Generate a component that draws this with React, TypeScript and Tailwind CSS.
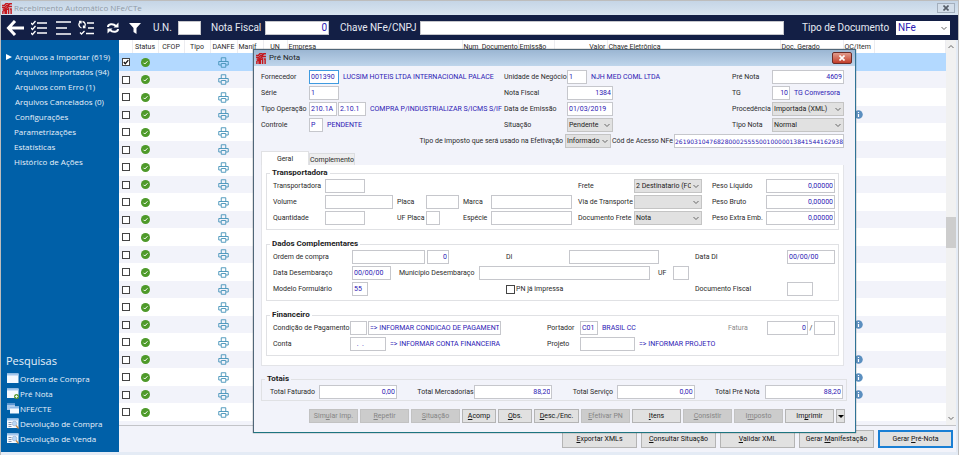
import React, { useId, useState } from "react";
import clsx from "clsx";

const menuItems = [
  { label: "Arquivos a Importar (619)", sub: true },
  { label: "Arquivos Importados (94)", sub: true },
  { label: "Arquivos com Erro (1)", sub: true },
  { label: "Arquivos Cancelados (0)", sub: true },
  { label: "Configurações", sub: true },
  { label: "Parametrizações", sub: false },
  { label: "Estatísticas", sub: false },
  { label: "Histórico de Ações", sub: false },
];

const searchItems = [
  { label: "Ordem de Compra", icon: "window" },
  { label: "Pré Nota", icon: "add" },
  { label: "NFE/CTE", icon: "stack" },
  { label: "Devolução de Compra", icon: "find" },
  { label: "Devolução de Venda", icon: "find" },
];

const columns = [
  { label: "", width: "w-[13px]" },
  { label: "Status", width: "w-[26px]", align: "text-center" },
  { label: "CFOP", width: "w-[26px]", align: "text-center" },
  { label: "Tipo", width: "w-[26px]", align: "text-center" },
  { label: "DANFE", width: "w-[27px]", align: "text-center" },
  { label: "Manif", width: "w-[26px]", align: "text-left" },
  { label: "UN", width: "w-[24px]", align: "text-center" },
  { label: "Empresa", width: "w-[175px]", align: "text-left" },
  { label: "Num_Documento", width: "w-[56px]", align: "text-left" },
  { label: "Emissão", width: "w-[36px]", align: "text-left" },
  { label: "Valor", width: "w-[53px]", align: "text-right" },
  { label: "Chave Eletrônica", width: "w-[173px]", align: "text-left" },
  { label: "Doc. Gerado", width: "w-[63px]", align: "text-left" },
  { label: "OC/Item", width: "w-[31px]", align: "text-left" },
  { label: "", width: "w-auto" },
];

const ROW_COUNT = 21;
const rowsWithInfo = [3, 15, 17, 18, 19];

/* ---------- icons ---------- */

function LogoIcon() {
  return (
    <svg viewBox="0 0 18 20" className="h-[11px] w-[10px] shrink-0" fill="none" stroke="#c4161c" aria-hidden="true">
      <path d="M0 4.500h4l3-3h5M0 8h5l3-3h3l3-3.500h4M1 11.500l5-1 4-2.500 2-1.500h6" strokeWidth="2.600" />
      <path d="M1.500 20v-5l4-3v8M8 20v-8l4-1.500V20M14.500 11h2v9" strokeWidth="2.600" />
    </svg>
  );
}

function BackIcon() {
  return (
    <svg viewBox="0 0 18 16" className="h-4 w-[18px]" fill="none" stroke="#fff" strokeWidth="3">
      <path d="M9 1 2.500 8 9 15M3 8h15" />
    </svg>
  );
}

function ChecklistIcon() {
  return (
    <svg viewBox="0 0 16 16" className="h-4 w-4" fill="none" stroke="#fff" strokeWidth="1.300">
      <path d="M6 3h10M6 8h10M6 13h10" />
      <path d="m0 3 1.500 1.500L4.500 1M0 8l1.500 1.500L4.500 6M0 13l1.500 1.500L4.500 11" />
    </svg>
  );
}

function LinesIcon() {
  return (
    <svg viewBox="0 0 16 16" className="h-4 w-4" fill="none" stroke="#fff" strokeWidth="1.400">
      <path d="M1 2h15M1 8h11M1 14h15" />
    </svg>
  );
}

function ReorderIcon() {
  return (
    <svg viewBox="0 0 17 16" className="h-4 w-[17px]" fill="none" stroke="#fff" strokeWidth="1.300">
      <path d="M9 3h7M10 8h6M8 13.500h8" />
      <path d="M3.500 8C.5 7 0 3.500 2.500 2M1 1.500h2v2M4.500 1.500c3 .5 3.500 4 1.500 6M7.500 7.500H5.500V5.500" />
      <path d="m2 12.500 1.500 1.500L6.500 11" />
    </svg>
  );
}

function RefreshIcon() {
  return (
    <svg viewBox="0 0 14 14" className="h-[14px] w-[14px]" fill="none" stroke="#fff" strokeWidth="2">
      <path d="M2 6c0-3 5-4 8-1M12 8c0 3-5 4-8 1" />
      <path d="M12.500 1.500v5h-5zM1.500 12.500v-5h5z" fill="#fff" stroke="none" />
    </svg>
  );
}

function FilterIcon() {
  return (
    <svg viewBox="0 0 12 12" className="h-3 w-3" fill="#fff">
      <path d="M0 1h12L7.500 6v6l-3-2V6z" />
    </svg>
  );
}

function StatusIcon() {
  return (
    <svg viewBox="0 0 18 18" className="mx-auto h-[9px] w-[9px]" role="img" aria-label="OK">
      <circle cx="9" cy="9" r="9" fill="#4e9a2a" />
      <path d="m5 9.500 2.500 2.500L13 6.500" stroke="#fff" strokeWidth="2" fill="none" />
    </svg>
  );
}

function PrinterIcon() {
  return (
    <svg viewBox="0 0 22 22" className="mx-auto h-[11px] w-[11px]" fill="none" stroke="#4291b8" strokeWidth="1.800">
      <path d="M6.500 9V1.500h9V9M6 16H1.500V9h19v7H16M6.500 13h9v7.500h-9z" />
    </svg>
  );
}

function InfoIcon() {
  return (
    <svg viewBox="0 0 18 18" className="mx-auto h-[9px] w-[9px]">
      <circle cx="9" cy="9" r="8.500" fill="#5b8fc0" />
      <path d="M9 8v6M9 4v2" stroke="#fff" strokeWidth="2.400" />
    </svg>
  );
}

function SearchMenuIcon({ kind }: { kind: string }) {
  return (
    <svg viewBox="0 0 24 22" className="h-[11px] w-3 shrink-0" aria-hidden="true">
      {kind === "stack" ? (
        <>
          <rect x="0" y="1" width="16" height="13" fill="#a9c8ea" />
          <rect x="0" y="1" width="16" height="3" fill="#5e97d4" />
          <rect x="6" y="7" width="18" height="14" fill="#f5f9fe" />
          <rect x="6" y="7" width="18" height="4" fill="#8fb9e6" />
        </>
      ) : (
        <>
          <rect x="0" y="1" width="23" height="19" fill="#f5f9fe" />
          <rect x="0" y="1" width="23" height="4" fill="#a5c8ee" />
        </>
      )}
      {kind === "add" && (
        <>
          <circle cx="19" cy="17" r="5" fill="#5d9c38" />
          <path d="M19 14v6M16 17h6" stroke="#fff" strokeWidth="1.500" />
        </>
      )}
      {kind === "find" && (
        <>
          <path d="M3 9h6M3 13h6M3 17h6" stroke="#8494b0" strokeWidth="2" />
          <circle cx="15" cy="11" r="4.500" fill="#b9d7f5" stroke="#9db6d4" strokeWidth="1.500" />
          <path d="m18 15 5 6" stroke="#c48a4c" strokeWidth="2.500" />
        </>
      )}
    </svg>
  );
}

function Chevron({ className }: { className?: string }) {
  return (
    <svg viewBox="0 0 8 5" className={clsx("h-[5px] w-2", className)} fill="none" stroke="#666" strokeWidth="1">
      <path d="m1.500 1 2.500 2.500L6.500 1" />
    </svg>
  );
}

/* ---------- form parts ---------- */

type FieldProps = {
  label?: string;
  name?: string;
  labelClass?: string;
  inputClass?: string;
  value?: string;
  after?: string;
  muted?: boolean;
};

function Field({ label, name, labelClass, inputClass, value = "", after, muted }: FieldProps) {
  const id = useId();
  return (
    <>
      {label && (
        <label htmlFor={id} className={clsx("shrink-0 whitespace-nowrap", muted && "text-[#8a8a8a]", labelClass)}>
          {label}
        </label>
      )}
      <input
        id={id}
        aria-label={label ? undefined : name}
        defaultValue={value}
        className={clsx(
          "h-[14px] min-w-0 rounded-none border bg-white text-[#2c20b4] outline-none",
          inputClass?.includes("border-") ? "" : "border-[#c6c7cc]",
          inputClass?.includes("px-") ? "" : "px-px",
          inputClass
        )}
      />
      {after && <span className="ml-1 whitespace-nowrap text-[#2c20b4]">{after}</span>}
    </>
  );
}

type SelectFieldProps = { label: string; labelClass?: string; boxClass?: string; value: string };

function SelectField({ label, labelClass, boxClass, value }: SelectFieldProps) {
  const id = useId();
  return (
    <>
      <label htmlFor={id} className={clsx("shrink-0 whitespace-nowrap", labelClass)}>
        {label}
      </label>
      <div className={clsx("relative shrink-0", boxClass)}>
        <select
          id={id}
          className="block h-[14px] w-full appearance-none rounded-none border border-[#c4c4c4] bg-[#e1e1e1] pl-px pr-[10px] text-[#222] outline-none"
        >
          <option>{value}</option>
        </select>
        <Chevron className="pointer-events-none absolute right-[2px] top-[5px]" />
      </div>
    </>
  );
}

function Row({ className, children }: { className?: string; children?: React.ReactNode }) {
  return <div className={clsx("flex h-[14px] min-w-0 items-center", className)}>{children}</div>;
}

function Group({ title, className, children }: { title: string; className?: string; children: React.ReactNode }) {
  return (
    <fieldset className={clsx("min-w-0 border border-[#e0e1e4] pl-[6px] pt-px", className)}>
      <legend className="-ml-[3px] h-[10px] px-[2px] text-[8px] font-bold leading-[10px] text-[#1c1c1c]">{title}</legend>
      {children}
    </fieldset>
  );
}

// "hot" is the letter that gets the accelerator underline
function HotText({ text, hot }: { text: string; hot: number }) {
  return (
    <>
      {text.slice(0, hot)}
      <u>{text[hot]}</u>
      {text.slice(hot + 1)}
    </>
  );
}

const dialogActions = [
  { text: "Simular Imp.", hot: 3, width: "w-[49px]", disabled: true },
  { text: "Repetir", hot: 0, width: "w-[49px]", disabled: true },
  { text: "Situação", hot: 0, width: "w-[49px]", disabled: true },
  { text: "Acomp", hot: 0, width: "w-[34px]" },
  { text: "Obs.", hot: 0, width: "w-[34px]" },
  { text: "Desc./Enc.", hot: 0, width: "w-[45px]" },
  { text: "Efetivar PN", hot: 0, width: "w-[49px]", disabled: true },
  { text: "Itens", hot: 0, width: "w-[49px]" },
  { text: "Consistir", hot: 0, width: "w-[49px]", disabled: true },
  { text: "Imposto", hot: 1, width: "w-[49px]", disabled: true },
  { text: "Imprimir", hot: 2, width: "w-[49px]" },
];

const pageActions = [
  { text: "Exportar XMLs", hot: 0 },
  { text: "Consultar Situação", hot: 0 },
  { text: "Validar XML", hot: 0 },
  { text: "Gerar Manifestação", hot: 6 },
  { text: "Gerar Pré-Nota", hot: 6, primary: true },
];

/* ---------- page areas ---------- */

function Toolbar() {
  return (
    <div className="flex h-[25px] items-center bg-[#131f45] pl-[5px] pr-2 text-[10px] text-[#e6eaf3]">
      <div className="flex shrink-0 items-center gap-[7px]">
        <button aria-label="Voltar"><BackIcon /></button>
        <button aria-label="Marcar"><ChecklistIcon /></button>
        <button aria-label="Desmarcar" className="ml-[1px]"><LinesIcon /></button>
        <button aria-label="Inverter"><ReorderIcon /></button>
        <button aria-label="Atualizar" className="ml-1"><RefreshIcon /></button>
        <button aria-label="Filtrar" className="ml-[2px]"><FilterIcon /></button>
      </div>
      <Field label="U.N." labelClass="ml-3 w-[25px]" inputClass="w-[23px]" />
      <Field label="Nota Fiscal" labelClass="ml-[10px] w-[54px]" inputClass="w-[64px] text-right" value="0" />
      <Field label="Chave NFe/CNPJ" labelClass="ml-[11px] w-[80px]" inputClass="flex-1" />
      <label htmlFor="doc-type" className="ml-[18px] w-[94px] shrink-0">Tipo de Documento</label>
      <div className="relative w-[54px] shrink-0">
        <select id="doc-type" className="block h-[14px] w-full appearance-none bg-white pl-[2px] pr-3 text-[10px] leading-[14px] text-[#2c20b4] outline-none">
          <option>NFe</option>
        </select>
        <Chevron className="pointer-events-none absolute right-[2px] top-[5px]" />
      </div>
    </div>
  );
}

function Sidebar() {
  const [active, setActive] = useState(0);
  return (
    <nav className="flex w-[118px] shrink-0 flex-col justify-between bg-[#0060a8] pb-[6px] pt-[9px] font-['Open_Sans',sans-serif] text-[8px] text-[#e8f1fa]">
      <ul>
        {menuItems.map((item, i) => (
          <li key={item.label} className="flex h-[15px] items-center pl-[5px]">
            <svg viewBox="0 0 6 6" className={clsx("h-[6px] w-[6px]", active !== i && "invisible")}>
              <path d="M0 0l6 3-6 3z" fill="#fff" />
            </svg>
            <a href="#" onClick={() => setActive(i)} className={item.sub ? "pl-[3px]" : "pl-[2px]"}>
              {item.label}
            </a>
          </li>
        ))}
      </ul>
      <div>
        <h2 className="pl-[5px] text-[11px] leading-[20px]">Pesquisas</h2>
        <ul>
          {searchItems.map((item) => (
            <li key={item.label} className="flex h-[15px] items-center gap-px pl-[6px]">
              <SearchMenuIcon kind={item.icon} />
              <a href="#">{item.label}</a>
            </li>
          ))}
        </ul>
      </div>
    </nav>
  );
}

function RowCheck({ label, checked }: { label: string; checked: boolean }) {
  return (
    <div className="ml-[3px] grid h-2 w-2">
      <input
        type="checkbox"
        defaultChecked={checked}
        aria-label={label}
        className="peer col-start-1 row-start-1 h-2 w-2 appearance-none border border-[#444] bg-white"
      />
      <svg
        viewBox="0 0 8 8"
        className="pointer-events-none invisible col-start-1 row-start-1 h-2 w-2 peer-checked:visible"
        fill="none"
        stroke="#111"
        strokeWidth="1.300"
      >
        <path d="M1.800 4l1.500 1.700L6.300 2.200" />
      </svg>
    </div>
  );
}

function InvoiceTable() {
  return (
    <div className="flex border-b border-[#c3c4c8] bg-white">
      <div className="min-w-0 flex-1 overflow-hidden bg-[#f2f3fa]">
        <table className="w-full table-fixed border-collapse bg-white">
          <thead>
            <tr className="h-[13px]">
              {columns.map((col, i) => (
                <th key={i} className={clsx("whitespace-nowrap border-r border-[#ececf0] p-0 px-px font-normal", col.width, col.align)}>
                  {col.label}
                </th>
              ))}
            </tr>
          </thead>
          <tbody>
            {Array.from({ length: ROW_COUNT }, (_, i) => (
              <tr key={i} className={clsx("odd:h-[18px] even:h-[17px]", i === 0 ? "bg-[#b3d9ff]" : "even:bg-[#f2f3fa]")}>
                <td className="p-0">
                  <RowCheck label={`Selecionar linha ${i + 1}`} checked={i === 0} />
                </td>
                <td className="p-0"><StatusIcon /></td>
                <td className="p-0" />
                <td className="p-0" />
                <td className="p-0"><PrinterIcon /></td>
                <td className="p-0" colSpan={8} />
                <td className="p-0">{rowsWithInfo.includes(i) && <InfoIcon />}</td>
                <td className="p-0" />
              </tr>
            ))}
          </tbody>
        </table>
        <div className="h-1" />
      </div>
      <div className="flex w-[10px] shrink-0 flex-col items-center bg-[#f1f1f1] py-1">
        <Chevron className="rotate-180" />
        <div className="basis-[168px]" />
        <div className="h-[31px] w-full bg-[#cdcdcd]" />
        <div className="flex-1" />
        <Chevron />
      </div>
    </div>
  );
}

function PreNotaDialog() {
  return (
    <section
      role="dialog"
      aria-label="Pré Nota"
      className="absolute left-[252px] right-[102px] top-[48px] border border-[#4f6678] border-b-[#1d7580] border-r-[#2f7396] bg-[#f2f3fa] shadow-[0_0_1px_#555]"
    >
      <div className="flex h-[16px] items-center bg-linear-to-b from-[#9bb6d3] to-[#bfd5eb] pl-[2px] pr-[3px]">
        <LogoIcon />
        <h1 className="ml-[3px] flex-1 text-[8px] text-[#222]">Pré Nota</h1>
        <button
          aria-label="Fechar"
          className="flex h-[12px] w-[20px] items-center justify-center rounded-[2px] border border-[#6b2c28] bg-linear-to-b from-[#e09a8c] to-[#c23a28]"
        >
          <svg viewBox="0 0 6 6" className="h-[6px] w-[6px]" stroke="#fff" strokeWidth="1.600">
            <path d="M.5.5l5 5M5.500.5l-5 5" />
          </svg>
        </button>
      </div>

      <form className="pb-[9px] pl-[7px] pr-2 pt-1" onSubmit={(e) => e.preventDefault()}>
        <div className="mr-[3px] grid grid-cols-[243px_minmax(0,1fr)_112px] gap-y-[2px]">
          <Row>
            <Field label="Fornecedor" labelClass="w-[48px]" inputClass="w-[30px] shrink-0 border-[#3f9be0] bg-[#eef6fd]" value="001390" after="LUCSIM HOTEIS LTDA INTERNACIONAL PALACE" />
          </Row>
          <Row>
            <Field label="Unidade de Negócio" labelClass="w-[63px]" inputClass="w-[20px]" value="1" after="NJH MED COML LTDA" />
          </Row>
          <Row>
            <Field label="Pré Nota" labelClass="w-[40px]" inputClass="w-[72px] text-right" value="4609" />
          </Row>

          <Row>
            <Field label="Série" labelClass="w-[48px]" inputClass="w-[30px]" value="1" />
          </Row>
          <Row>
            <Field label="Nota Fiscal" labelClass="w-[63px]" inputClass="w-[46px] text-right" value="1384" />
          </Row>
          <Row>
            <Field label="TG" labelClass="w-[40px]" inputClass="w-[18px] shrink-0 text-right" value="10" after="TG Conversora" />
          </Row>

          <Row>
            <Field label="Tipo Operação" labelClass="w-[48px]" inputClass="w-[28px] shrink-0" value="210.1A" />
            <Field name="Código da operação" inputClass="ml-px w-[28px] shrink-0" value="2.10.1" after="COMPRA P/INDUSTRIALIZAR S/ICMS S/IF" />
          </Row>
          <Row>
            <Field label="Data de Emissão" labelClass="w-[63px]" inputClass="w-[46px]" value="01/03/2019" />
          </Row>
          <Row>
            <SelectField label="Procedência" labelClass="w-[40px]" boxClass="w-[72px]" value="Importada (XML)" />
          </Row>

          <Row>
            <Field label="Controle" labelClass="w-[48px]" inputClass="w-[14px]" value="P" after="PENDENTE" />
          </Row>
          <Row>
            <SelectField label="Situação" labelClass="w-[63px]" boxClass="w-[46px]" value="Pendente" />
          </Row>
          <Row>
            <SelectField label="Tipo Nota" labelClass="w-[40px]" boxClass="w-[72px]" value="Normal" />
          </Row>

          <Row className="col-span-3">
            <SelectField label="Tipo de imposto que será usado na Efetivação" labelClass="w-[304px] pr-[2px] text-right" boxClass="w-[46px]" value="Informado" />
            <Field label="Cód de Acesso NFe" labelClass="ml-px w-[62px]" inputClass="flex-1 px-0 font-['DejaVu_Sans',sans-serif] text-[6px]" value="26190310476828000255550010000013841544162938" />
          </Row>
        </div>

        <div role="tablist" className="mt-[3px] flex items-end">
          <button type="button" role="tab" aria-selected="true" className="h-[14px] w-[48px] border border-b-0 border-[#e0e1e4] bg-white">
            Geral
          </button>
          <button type="button" role="tab" aria-selected="false" className="h-[12px] w-[46px] border border-b-0 border-[#dcdde0] bg-[#eeeeef]">
            Complemento
          </button>
        </div>

        <div role="tabpanel" className="mr-[3px] space-y-[9px] border border-t-0 border-[#e3e4e8] bg-white px-1 pb-[9px] pt-[3px]">
          <Group title="Transportadora" className="pb-1 pr-[3px]">
            <div className="grid grid-cols-[52px_72px_29px_37px_28px_minmax(0,1fr)_56px_78px_54px_69px] items-center gap-y-[2px]">
              <Field label="Transportadora" inputClass="w-[40px]" />
              <span className="col-span-4" />
              <SelectField label="Frete" boxClass="w-[68px]" value="2 Destinatario (FOB)" />
              <Field label="Peso Líquido" inputClass="text-right" value="0,00000" />

              <Field label="Volume" inputClass="w-[68px]" />
              <Field label="Placa" inputClass="w-[33px]" />
              <Field label="Marca" inputClass="mr-[6px]" />
              <SelectField label="Via de Transporte" boxClass="w-[68px]" value="" />
              <Field label="Peso Bruto" inputClass="text-right" value="0,00000" />

              <Field label="Quantidade" inputClass="w-[40px]" />
              <Field label="UF Placa" inputClass="w-[14px]" />
              <Field label="Espécie" inputClass="mr-[6px]" />
              <SelectField label="Documento Frete" boxClass="w-[68px]" value="Nota" />
              <Field label="Peso Extra Emb." inputClass="text-right" value="0,00000" />
            </div>
          </Group>

          <Group title="Dados Complementares" className="pb-1 pr-[3px]">
            <div className="grid grid-cols-[233px_minmax(0,1fr)_140px] gap-y-[2px]">
              <Row>
                <Field label="Ordem de compra" labelClass="w-[79px]" inputClass="w-[73px]" />
                <Field name="Item da ordem" inputClass="ml-[2px] w-[22px] text-right" value="0" />
              </Row>
              <Row>
                <Field label="DI" labelClass="w-[63px]" inputClass="w-[90px]" />
              </Row>
              <Row>
                <Field label="Data DI" labelClass="w-[92px]" inputClass="w-[48px]" value="00/00/00" />
              </Row>

              <Row className="col-span-2">
                <Field label="Data Desembaraço" labelClass="w-[79px]" inputClass="w-[39px]" value="00/00/00" />
                <Field label="Município Desembaraço" labelClass="ml-2 w-[80px]" inputClass="flex-1" />
                <Field label="UF" labelClass="ml-2 w-[15px]" inputClass="mr-[6px] w-[16px]" />
              </Row>
              <Row />

              <Row>
                <Field label="Modelo Formulário" labelClass="w-[79px]" inputClass="w-[16px]" value="55" />
              </Row>
              <Row>
                <input id="printed" type="checkbox" className="h-[9px] w-[9px] appearance-none border border-[#444] bg-white checked:bg-[#444]" />
                <label htmlFor="printed" className="pl-px">PN já impressa</label>
              </Row>
              <Row>
                <Field label="Documento Fiscal" labelClass="w-[92px]" inputClass="w-[26px]" />
              </Row>
            </div>
          </Group>

          <Group title="Financeiro" className="pb-1 pr-[3px]">
            <div className="grid grid-cols-[274px_minmax(0,1fr)_107px] gap-y-[2px]">
              <Row>
                <Field label="Condição de Pagamento" labelClass="w-[77px]" inputClass="w-[17px]" />
                <Field name="Descrição do pagamento" inputClass="ml-px w-[133px]" value="=> INFORMAR CONDICAO DE PAGAMENTO" />
              </Row>
              <Row>
                <Field label="Portador" labelClass="w-[33px]" inputClass="w-[18px]" value="C01" after="BRASIL CC" />
              </Row>
              <Row>
                <Field label="Fatura" muted labelClass="w-[39px]" inputClass="w-[41px] text-right" value="0" />
                <Field label="/" labelClass="w-[6px] text-center" inputClass="w-[21px]" />
              </Row>

              <Row>
                <Field label="Conta" labelClass="w-[77px]" inputClass="w-[36px] pl-1" value=" .  . " after="=> INFORMAR CONTA FINANCEIRA" />
              </Row>
              <Row>
                <Field label="Projeto" labelClass="w-[33px]" inputClass="w-[55px]" after="=> INFORMAR PROJETO" />
              </Row>
            </div>
          </Group>
        </div>

        <Group title="Totais" className="mt-[8px] pb-px pr-[3px]">
          <div className="flex justify-between pl-[2px]">
            <Row><Field label="Total Faturado" labelClass="w-[49px]" inputClass="w-[78px] text-right" value="0,00" /></Row>
            <Row><Field label="Total Mercadorias" labelClass="w-[57px]" inputClass="w-[78px] text-right" value="88,20" /></Row>
            <Row><Field label="Total Serviço" labelClass="w-[44px]" inputClass="w-[78px] text-right" value="0,00" /></Row>
            <Row><Field label="Total Pré Nota" labelClass="w-[50px]" inputClass="w-[78px] text-right" value="88,20" /></Row>
          </div>
        </Group>

        <div className="mr-[2px] mt-2 flex justify-end gap-[2px]">
          {dialogActions.map((a) => (
            <button
              key={a.text}
              type="button"
              disabled={a.disabled}
              className={clsx(
                "h-[14px] border",
                a.width,
                a.disabled ? "border-[#c2c2c2] bg-[#cccccc] text-[#858585]" : "border-[#b4b4b4] bg-[#e1e1e1] text-[#111]"
              )}
            >
              <HotText text={a.text} hot={a.hot} />
            </button>
          ))}
          <button type="button" aria-label="Mais opções" className="flex h-[14px] w-[9px] items-center justify-center border border-[#b4b4b4] bg-[#e1e1e1]">
            <svg viewBox="0 0 6 3" className="h-[3px] w-[6px]"><path d="M0 0h6L3 3z" fill="#000" /></svg>
          </button>
        </div>
      </form>
    </section>
  );
}

export default function App() {
  return (
    <div className="min-h-screen bg-white pr-[2px] font-[Roboto,sans-serif] text-[7px] leading-[10px] text-[#2a2a2a]">
      <main className="relative flex min-h-screen flex-col border-x border-t border-[#bdbdbd] bg-[#e4ebf5]">
        <header className="flex h-[14px] items-center bg-linear-to-b from-[#c5d5e6] to-[#d9e5f1] pl-px pr-[3px]">
          <LogoIcon />
          <h1 className="ml-[2px] flex-1 font-['Open_Sans',sans-serif] text-[8px] text-[#8f9aa6]">Recebimento Automático NFe/CTe</h1>
          <button aria-label="Fechar janela" className="flex h-[10px] w-[18px] items-center justify-center border border-[#a3afbd] bg-[#d3deea]">
            <svg viewBox="0 0 6 6" className="h-[6px] w-[6px]" stroke="#555d68" strokeWidth="1.600">
              <path d="M.5.5l5 5M5.500.5l-5 5" />
            </svg>
          </button>
        </header>

        <Toolbar />

        <div className="mb-[3px] mr-[2px] flex flex-1">
          <Sidebar />
          <div className="flex min-w-0 flex-1 flex-col bg-[#f2f3fa]">
            <InvoiceTable />
            <div className="flex justify-end gap-1 pr-[3px] pt-1">
              {pageActions.map((a) => (
                <button
                  key={a.text}
                  className={clsx(
                    "h-[18px] w-[75px] bg-[#e1e1e1] text-[#111]",
                    a.primary ? "border-2 border-[#1a7fd4]" : "border border-[#b4b4b4]"
                  )}
                >
                  <HotText text={a.text} hot={a.hot} />
                </button>
              ))}
            </div>
          </div>
        </div>

        <PreNotaDialog />
      </main>
    </div>
  );
}
